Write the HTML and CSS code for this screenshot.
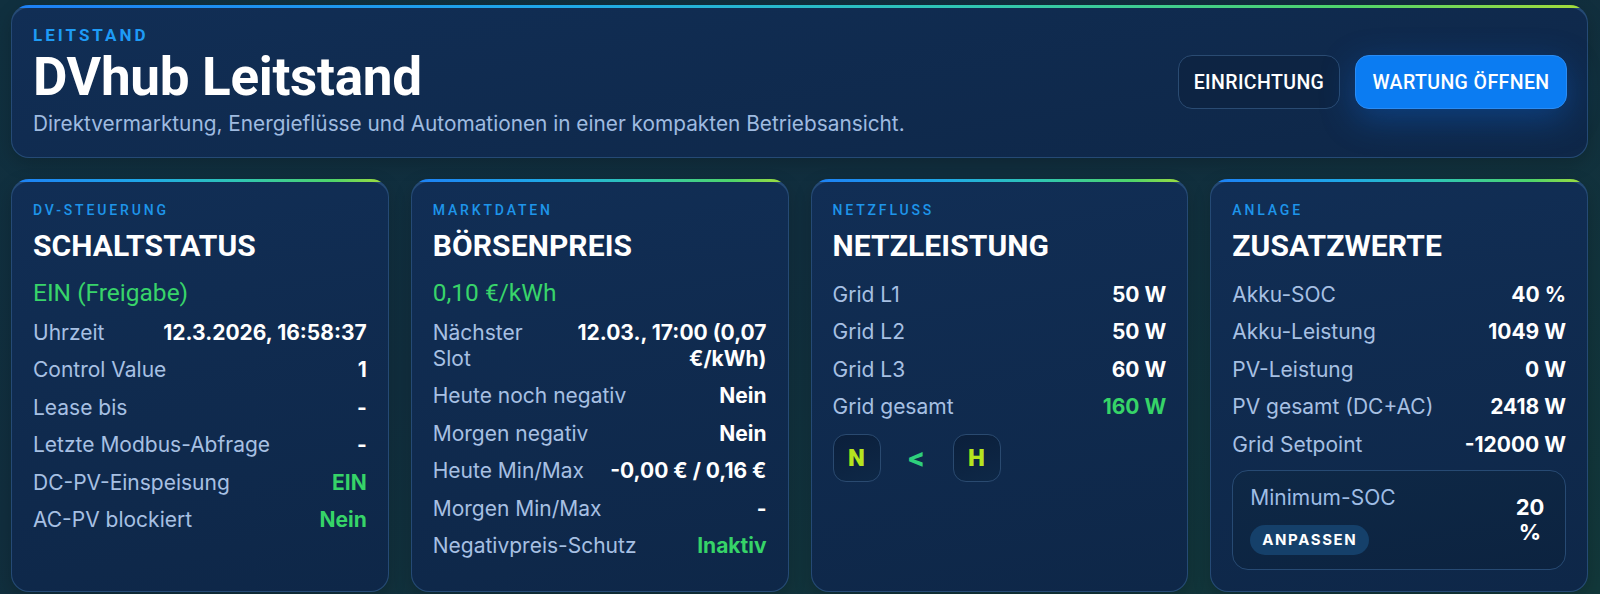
FILE: index.html
```html
<!DOCTYPE html>
<html lang="de">
<head>
<meta charset="utf-8">
<title>DVhub Leitstand</title>
<link rel="stylesheet" href="styles.css">
</head>
<body>
<main class="page">
  <header class="hero">
    <div class="hero-text">
      <div class="eyebrow">LEITSTAND</div>
      <h1 class="hero-title">DVhub Leitstand</h1>
      <p class="hero-sub">Direktvermarktung, Energieflüsse und Automationen in einer kompakten Betriebsansicht.</p>
    </div>
    <div class="hero-actions">
      <button class="btn btn-ghost">EINRICHTUNG</button>
      <button class="btn btn-primary">WARTUNG ÖFFNEN</button>
    </div>
  </header>

  <section class="cards">
    <article class="card">
      <div class="card-label">DV-STEUERUNG</div>
      <h2 class="card-title">SCHALTSTATUS</h2>
      <div class="status">EIN (Freigabe)</div>
      <div class="rows">
        <div class="row"><span class="k">Uhrzeit</span><span class="v">12.3.2026, 16:58:37</span></div>
        <div class="row"><span class="k">Control Value</span><span class="v">1</span></div>
        <div class="row"><span class="k">Lease bis</span><span class="v">-</span></div>
        <div class="row"><span class="k">Letzte Modbus-Abfrage</span><span class="v">-</span></div>
        <div class="row"><span class="k">DC-PV-Einspeisung</span><span class="v ok">EIN</span></div>
        <div class="row"><span class="k">AC-PV blockiert</span><span class="v ok">Nein</span></div>
      </div>
    </article>

    <article class="card">
      <div class="card-label">MARKTDATEN</div>
      <h2 class="card-title">BÖRSENPREIS</h2>
      <div class="status">0,10 €/kWh</div>
      <div class="rows">
        <div class="row"><span class="k">Nächster Slot</span><span class="v">12.03., 17:00 (0,07 €/kWh)</span></div>
        <div class="row"><span class="k">Heute noch negativ</span><span class="v">Nein</span></div>
        <div class="row"><span class="k">Morgen negativ</span><span class="v">Nein</span></div>
        <div class="row"><span class="k">Heute Min/Max</span><span class="v">-0,00 € / 0,16 €</span></div>
        <div class="row"><span class="k">Morgen Min/Max</span><span class="v">-</span></div>
        <div class="row"><span class="k">Negativpreis-Schutz</span><span class="v ok">Inaktiv</span></div>
      </div>
    </article>

    <article class="card">
      <div class="card-label">NETZFLUSS</div>
      <h2 class="card-title">NETZLEISTUNG</h2>
      <div class="rows rows-top">
        <div class="row"><span class="k">Grid L1</span><span class="v">50 W</span></div>
        <div class="row"><span class="k">Grid L2</span><span class="v">50 W</span></div>
        <div class="row"><span class="k">Grid L3</span><span class="v">60 W</span></div>
        <div class="row"><span class="k">Grid gesamt</span><span class="v ok">160 W</span></div>
      </div>
      <div class="flow">
        <span class="node">N</span>
        <span class="arrow">&lt;</span>
        <span class="node">H</span>
      </div>
    </article>

    <article class="card">
      <div class="card-label">ANLAGE</div>
      <h2 class="card-title">ZUSATZWERTE</h2>
      <div class="rows rows-top">
        <div class="row"><span class="k">Akku-SOC</span><span class="v">40 %</span></div>
        <div class="row"><span class="k">Akku-Leistung</span><span class="v">1049 W</span></div>
        <div class="row"><span class="k">PV-Leistung</span><span class="v">0 W</span></div>
        <div class="row"><span class="k">PV gesamt (DC+AC)</span><span class="v">2418 W</span></div>
        <div class="row"><span class="k">Grid Setpoint</span><span class="v">-12000 W</span></div>
      </div>
      <div class="soc">
        <div class="soc-left">
          <div class="soc-label">Minimum-SOC</div>
          <button class="pill">ANPASSEN</button>
        </div>
        <div class="soc-value">20 %</div>
      </div>
    </article>
  </section>
</main>
</body>
</html>
```

FILE: styles.css
```css
* { box-sizing: border-box; }

html, body {
  margin: 0;
  padding: 0;
}

body {
  background: linear-gradient(160deg, #10303f 0%, #112e3e 45%, #12383a 100%);
  min-height: 594px;
  font-family: "Inter", "Noto Sans", sans-serif;
  color: #ffffff;
  overflow: hidden;
}

.page {
  padding: 5px 12px 0 11px;
  display: flex;
  flex-direction: column;
  gap: 21px;
}

/* shared panel look with gradient top edge */
.hero,
.card {
  border: 1px solid transparent;
  border-top-width: 3px;
  background:
    linear-gradient(170deg, #112e55 0%, #0e2748 100%) padding-box,
    linear-gradient(90deg, #1d7ff5 0%, #1fa8e8 35%, #2fc6b4 60%, #4fd56a 85%, #a6dc3a 100%) top / 100% 3px no-repeat border-box,
    linear-gradient(#254a75, #254a75) border-box;
}

.hero {
  border-radius: 18px;
  height: 153px;
  padding: 17px 20px 0 21px;
  display: flex;
  justify-content: space-between;
  align-items: flex-start;
  box-shadow: 0 6px 18px rgba(0, 0, 0, 0.18);
}

.eyebrow {
  font-family: "Roboto", sans-serif;
  font-weight: 700;
  font-size: 17px;
  line-height: 20px;
  letter-spacing: 3px;
  color: #1e9bf5;
}

.hero-title {
  margin: 3px 0 0;
  font-family: "Roboto", sans-serif;
  font-weight: 700;
  font-size: 53px;
  line-height: 58px;
  letter-spacing: -0.3px;
  color: #ffffff;
}

.hero-sub {
  margin: 4px 0 0;
  font-size: 20.8px;
  line-height: 28px;
  color: #9fbbe0;
}

.hero-actions {
  display: flex;
  gap: 15px;
  margin-top: 30px;
}

.btn {
  height: 54px;
  padding: 0 12px;
  border-radius: 14px;
  font-family: "Roboto", sans-serif;
  font-weight: 500;
  font-size: 19.5px;
  letter-spacing: 0.4px;
  color: #ffffff;
  cursor: pointer;
}

.btn-ghost {
  width: 162px;
  background: #0d2443;
  border: 1px solid #2a4b72;
}

.btn-primary {
  width: 212px;
  background: #0b7cf2;
  border: 1px solid #2a8cf5;
  box-shadow: 0 10px 34px rgba(12, 110, 230, 0.35);
}

/* cards */
.cards {
  display: grid;
  grid-template-columns: repeat(4, 1fr);
  gap: 22px;
}

.card {
  border-radius: 18px;
  padding: 20px 21px 21px 21px;
  display: flex;
  flex-direction: column;
  box-shadow: 0 6px 18px rgba(0, 0, 0, 0.18);
}

.card-label {
  font-family: "Roboto", sans-serif;
  font-weight: 500;
  font-size: 14px;
  line-height: 16px;
  letter-spacing: 2.85px;
  color: #1e95ea;
}

.card-title {
  margin: 11px 0 0;
  font-family: "Roboto", sans-serif;
  font-weight: 700;
  font-size: 30px;
  line-height: 33px;
  letter-spacing: 0.1px;
  color: #ffffff;
}

.status {
  margin-top: 13px;
  font-family: "Roboto", sans-serif;
  font-weight: 400;
  font-size: 24.5px;
  line-height: 28px;
  padding: 4px 0 7px;
  color: #38d46a;
}

.rows {
  display: flex;
  flex-direction: column;
}

.rows-top {
  margin-top: 14px;
}

.row {
  display: flex;
  justify-content: space-between;
  align-items: flex-start;
  gap: 16px;
  padding: 5.75px 0;
  font-size: 21px;
  line-height: 26px;
}

.k {
  color: #a7c0e3;
}

.v {
  color: #ffffff;
  font-weight: 700;
  text-align: right;
}

.v.ok {
  color: #36d468;
}

/* flow */
.flow {
  margin-top: 8px;
  display: flex;
  align-items: center;
  gap: 16px;
}

.node {
  width: 48px;
  height: 48px;
  border-radius: 13px;
  border: 1px solid #2a4a70;
  background: linear-gradient(160deg, #0b1f3b, #0e2847);
  display: flex;
  align-items: center;
  justify-content: center;
  font-family: "Roboto", sans-serif;
  font-weight: 900;
  font-size: 24px;
  color: #b4e51e;
}

.arrow {
  width: 40px;
  text-align: center;
  font-family: "Roboto", sans-serif;
  font-weight: 700;
  font-size: 32px;
  line-height: 32px;
  color: #2ed07c;
}

/* min soc */
.soc {
  margin-top: 6px;
  border: 1px solid #274a73;
  border-radius: 16px;
  background: linear-gradient(170deg, #0e2846, #0c2340);
  padding: 14px 17px 14px 17px;
  display: flex;
  justify-content: space-between;
  align-items: center;
}

.soc-label {
  font-size: 21px;
  line-height: 26px;
  color: #9fbde5;
}

.pill {
  margin-top: 14px;
  height: 30px;
  padding: 0 12px;
  border: none;
  border-radius: 15px;
  background: #15406a;
  color: #ffffff;
  font-family: "Inter", sans-serif;
  font-weight: 700;
  font-size: 15px;
  letter-spacing: 1.6px;
}

.soc-value {
  width: 36px;
  text-align: center;
  font-size: 22px;
  line-height: 25px;
  font-weight: 700;
  color: #ffffff;
}
```
